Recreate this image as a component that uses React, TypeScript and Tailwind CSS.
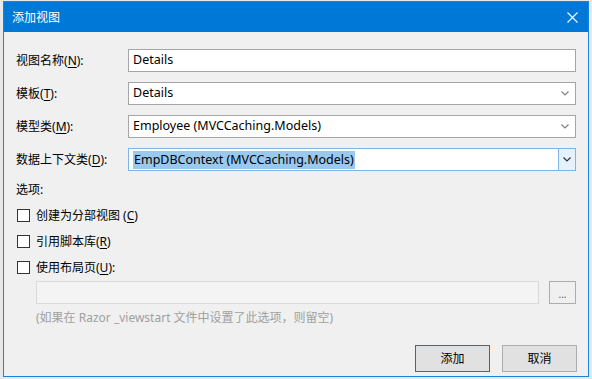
import React from "react";

const font = { fontFamily: '"Noto Sans", "Noto Sans CJK SC", sans-serif' };

function Chevron({ color = "#606060" }: { color?: string }) {
  return (
    <svg width="8" height="5" viewBox="0 0 8 5">
      <path d="M0.5 0.5 L4 4 L7.5 0.5" fill="none" stroke={color} strokeWidth="1.2" />
    </svg>
  );
}

function Label({ text, key1, tail = "):" }: { text: string; key1: string; tail?: string }) {
  return (
    <span>
      {text}(<span className="underline underline-offset-2">{key1}</span>
      {tail}
    </span>
  );
}

export default function App() {
  return (
    <div className="w-[592px] h-[379px] bg-[#e8e8e8] overflow-hidden text-[12px] text-[#000]" style={font}>
      <div className="ml-[3px] mt-[1px] w-[586px] h-[376px] border border-[#1883d7] bg-[#f0f0f0] flex flex-col">
        <div className="h-[30px] bg-[#0078d7] flex items-center justify-between pl-[8px] pr-[10px] text-white">
          <span className="text-[12px] mt-[1px]">添加视图</span>
          <svg width="11" height="11" viewBox="0 0 11 11">
            <path d="M0.5 0.5 L10.5 10.5 M10.5 0.5 L0.5 10.5" stroke="#fff" strokeWidth="1.1" />
          </svg>
        </div>
        <div className="flex flex-col pl-[12px] pr-[11px] pt-[17px]">
          <div className="grid grid-cols-[112px_448px] gap-y-[10px] items-center">
            <Label text="视图名称" key1="N" />
            <div className="h-[23px] border border-[#a5a5a5] bg-white flex items-center pl-[4px] text-[12.5px]">Details</div>

            <Label text="模板" key1="T" />
            <div className="h-[23px] border border-[#a5a5a5] bg-white flex items-center justify-between pl-[4px] pr-[6px] text-[12.5px]">
              <span>Details</span>
              <Chevron color="#808080" />
            </div>

            <Label text="模型类" key1="M" />
            <div className="h-[23px] border border-[#a5a5a5] bg-white flex items-center justify-between pl-[4px] pr-[6px] text-[12.5px]">
              <span>Employee (MVCCaching.Models)</span>
              <Chevron color="#808080" />
            </div>

            <Label text="数据上下文类" key1="D" />
            <div className="h-[23px] border border-[#7eb4ea] bg-white flex items-center justify-between pl-[4px] text-[12.5px]">
              <span className="bg-[#99c9ef] leading-[18px] px-[1px]">EmpDBContext (MVCCaching.Models)</span>
              <div className="h-full w-[17px] border-l border-[#7eb4ea] bg-[#e5f1fb] flex items-center justify-center">
                <Chevron color="#303030" />
              </div>
            </div>
          </div>

          <div className="mt-[11px] leading-[16px]">选项:</div>

          <div className="mt-[11px] flex flex-col gap-[13px]">
            <div className="flex items-center h-[13px]">
              <div className="w-[13px] h-[13px] border border-[#333] bg-white ml-[1px]" />
              <span className="ml-[6px]">
                创建为分部视图 (<span className="underline underline-offset-2">C</span>)
              </span>
            </div>
            <div className="flex items-center h-[13px]">
              <div className="w-[13px] h-[13px] border border-[#333] bg-white ml-[1px]" />
              <span className="ml-[6px]">
                引用脚本库(<span className="underline underline-offset-2">R</span>)
              </span>
            </div>
            <div className="flex items-center h-[13px]">
              <div className="w-[13px] h-[13px] border border-[#333] bg-white ml-[1px]" />
              <span className="ml-[6px]">
                使用布局页(<span className="underline underline-offset-2">U</span>):
              </span>
            </div>
          </div>

          <div className="mt-[7px] ml-[20px] flex items-center">
            <div className="w-[503px] h-[23px] border border-[#d9d9d9] bg-[#f4f4f4]" />
            <div className="ml-[10px] w-[27px] h-[23px] border border-[#adadad] bg-[#f0f0f0] flex items-end justify-center pb-[4px] text-[#606060] text-[10px] leading-[10px]">
              ...
            </div>
          </div>

          <div className="ml-[20px] mt-[6px] leading-[16px] text-[#a0a0a0]">
            (如果在 Razor _viewstart 文件中设置了此选项，则留空)
          </div>

          <div className="mt-[19px] flex justify-end gap-[12px]">
            <div className="w-[75px] h-[27px] border border-[#0078d7] bg-[#e1e1e1] flex items-center justify-center">添加</div>
            <div className="w-[75px] h-[27px] border border-[#adadad] bg-[#e1e1e1] flex items-center justify-center">取消</div>
          </div>
        </div>
      </div>
    </div>
  );
}
